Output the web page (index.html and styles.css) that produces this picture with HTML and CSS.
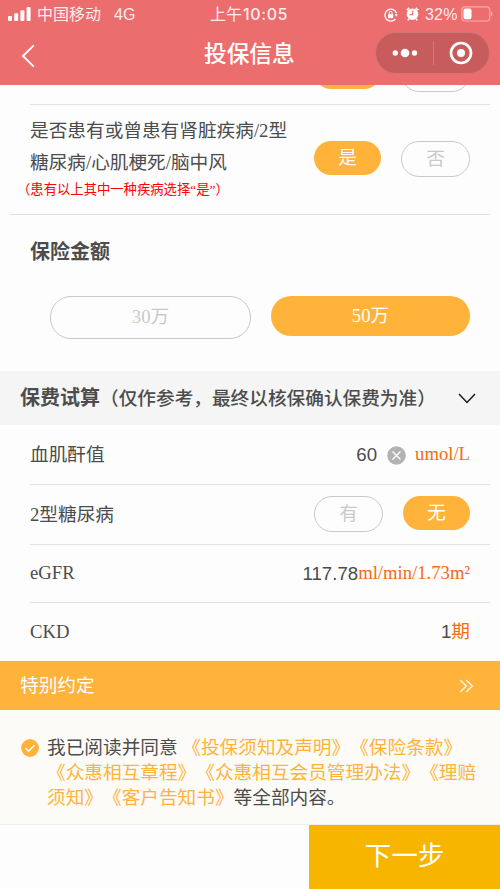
FILE: index.html
```html
<!DOCTYPE html>
<html lang="zh-CN">
<head>
<meta charset="utf-8">
<title>投保信息</title>
<link rel="stylesheet" href="styles.css">
</head>
<body>
<header class="header">
  <div class="status">
    <div class="status-left">
      <svg class="signal" width="23" height="14" viewBox="0 0 23 14" fill="#fff"><rect x="0" y="9" width="4" height="5" rx="1"/><rect x="6.2" y="6.2" width="4" height="7.8" rx="1"/><rect x="12.4" y="3.2" width="4" height="10.8" rx="1"/><rect x="18.6" y="0" width="4" height="14" rx="1"/></svg>
      <span class="carrier">中国移动</span><span class="network">4G</span>
    </div>
    <div class="clock">上午<span class="clock-time">10:05</span></div>
    <div class="status-right">
      <svg width="14" height="14" viewBox="0 0 14 14" fill="none" stroke="#fff" stroke-width="1.3"><path d="M12.6 5.3A6 6 0 1 0 11.5 11"/><path d="M10.6 6.2h3.2l-1.5 2.5z" fill="#fff" stroke="none"/><rect x="4" y="6.2" width="5.2" height="4" fill="#fff" stroke="none"/><path d="M5.1 6.3V5a1.5 1.5 0 0 1 3 0v1.3" stroke-width="1"/></svg>
      <svg class="alarm" width="13" height="14" viewBox="0 0 13 14"><circle cx="6.5" cy="7.2" r="5.8" fill="#fff"/><path d="M.8 3.1 3.3.8M12.2 3.1 9.7.8M2.8 11.8l-1 1.6M10.2 11.8l1 1.6" stroke="#fff" stroke-width="1.6"/><path d="M6.7 3.7v4H3.8" fill="none" stroke="#ec6d6d" stroke-width="1.2"/></svg>
      <span class="percent">32%</span>
      <svg class="battery" width="32" height="16" viewBox="0 0 32 16"><rect x=".8" y=".8" width="28" height="14.2" rx="3.5" fill="none" stroke="#f5adad" stroke-width="1.2"/><rect x="2.5" y="2.6" width="8" height="10.6" rx="2" fill="#fff"/><path d="M30 5.6c2 .5 2 4.300 0 4.800z" fill="#f5adad"/></svg>
    </div>
  </div>
  <div class="nav">
    <svg class="back" width="14" height="24" viewBox="0 0 14 24" fill="none" stroke="#fff" stroke-width="1.9"><path d="M12.800 1.300 2 12l10.800 10.700"/></svg>
    <h1 class="title">投保信息</h1>
    <div class="capsule">
      <svg width="26" height="10" viewBox="0 0 26 10" fill="#fff"><circle cx="3.300" cy="5" r="2.700"/><circle cx="13" cy="5" r="4.300"/><circle cx="22.500" cy="5" r="2.700"/></svg>
      <span class="capsule-line"></span>
      <svg width="24" height="24" viewBox="0 0 24 24"><circle cx="12" cy="12" r="10" fill="none" stroke="#fff" stroke-width="2.700"/><circle cx="12" cy="12" r="4" fill="#fff"/></svg>
    </div>
  </div>
</header>
<main>
  <div class="row row-clipped"><span class="pill on"></span><span class="pill off"></span></div>
  <section class="question">
    <div class="question-text">
      <p class="question-main">是否患有或曾患有肾脏疾病/2型<br>糖尿病/心肌梗死/脑中风</p>
      <p class="hint">（患有以上其中一种疾病选择<span class="quote">“</span>是<span class="quote">”</span>）</p>
    </div>
    <div class="pills"><span class="pill on">是</span><span class="pill off">否</span></div>
  </section>
  <section class="amount">
    <h2 class="amount-title">保险金额</h2>
    <div class="amount-options"><span class="wide off">30万</span><span class="wide on">50万</span></div>
  </section>
  <div class="trial">
    <div class="trial-title">保费试算<span class="trial-note">（仅作参考，最终以核保确认保费为准）</span></div>
    <svg width="18" height="11" viewBox="0 0 18 11" fill="none" stroke="#1c1c1c" stroke-width="1.500"><path d="m1 1 8 8.500L17 1"/></svg>
  </div>
  <div class="row row-creatinine">
    <span>血肌酐值</span>
    <div class="value"><span class="num">60</span>
      <svg class="clear" width="19" height="19" viewBox="0 0 19 19"><circle cx="9.500" cy="9.500" r="9.300" fill="#b2b2b2"/><path d="m5.500 5.500 8 8m0-8-8 8" stroke="#fff" stroke-width="1.300"/></svg>
      <span class="unit">umol/L</span></div>
  </div>
  <div class="row row-diabetes">
    <span>2型糖尿病</span>
    <div class="pills"><span class="pill off">有</span><span class="pill on">无</span></div>
  </div>
  <div class="row row-egfr"><span>eGFR</span><div class="value"><span class="num">117.78</span><span class="unit">ml/min/1.73m²</span></div></div>
  <div class="row row-ckd"><span>CKD</span><div class="value"><span class="num">1</span><span class="unit">期</span></div></div>
  <div class="special">
    <span>特别约定</span>
    <svg width="15" height="14" viewBox="0 0 15 14" fill="none" stroke="#fff2dc" stroke-width="1.600"><path d="m1.200 1 6 6-6 6M7.200 1l6 6-6 6"/></svg>
  </div>
  <section class="agreement">
    <svg class="check" width="18" height="18" viewBox="0 0 18 18"><circle cx="9" cy="9" r="8.900" fill="#ffb33b"/><path d="m4.500 9.200 3 3 6-6" fill="none" stroke="#fff" stroke-width="1.500"/></svg>
    <p class="agreement-text">我已阅读并同意 <a>《投保须知及声明》</a><a>《保险条款》</a><br><a>《众惠相互章程》</a><a>《众惠相互会员管理办法》</a><a>《理赔<br>须知》</a><a>《客户告知书》</a>等全部内容。</p>
  </section>
</main>
<footer class="footer"><div class="next">下一步</div></footer>
</body>
</html>
```

FILE: styles.css
```css
* { box-sizing: border-box; }
body {
  margin: 0;
  width: 500px;
  height: 889px;
  overflow: hidden;
  background: #fdfdfd;
  color: #4c4c4c;
  font: 18.67px/32px "Liberation Serif", "Noto Sans CJK SC", serif;
  text-spacing-trim: space-all;
}
h1, h2, p { margin: 0; }
svg { display: block; flex: none; }

.header { height: 85px; background: #ec6d6d; color: #fff; font-family: "Liberation Sans", "Noto Sans CJK SC", sans-serif; }
.status { height: 28px; display: grid; grid-template-columns: 200px 1fr 120px; font-size: 16px; line-height: 28px; color: #ffecec; }
.status-left { display: flex; align-items: center; padding-left: 8px; }
.signal { margin-top: -2px; }
.carrier { margin-left: 6px; }
.network { margin-left: 13px; }
.clock { padding-left: 10px; white-space: nowrap; }
.clock-time { margin-left: 1px; font-family: Inter, sans-serif; font-weight: 500; letter-spacing: .6px; }
.status-right { display: flex; align-items: center; padding-left: 4px; }
.alarm { margin: -2px 0 0 8px; }
.percent { margin: 0 3px 0 6px; letter-spacing: .2px; }
.battery { margin-top: -1px; }
.nav { height: 57px; display: grid; grid-template-columns: 204px 171px 115px; }
.back { margin: 16px 0 0 21px; }
.title { font-size: 22.7px; line-height: 52px; font-weight: 500; }
.capsule { width: 115px; height: 42px; margin-top: 4px; border: 1px solid #d27777; border-radius: 21px; background: #c85c5c; display: flex; align-items: center; padding-left: 16px; }
.capsule-line { width: 1px; height: 24px; margin: 0 15px 0 15px; background: #d77979; }

.row { margin-left: 30px; width: 460px; padding-right: 20px; display: flex; justify-content: space-between; border-bottom: 1px solid #e2e2e2; }
.row-clipped { height: 20px; overflow: hidden; align-items: flex-end; justify-content: flex-end; gap: 20px; padding-bottom: 12px; }
.row-clipped .on { margin-bottom: 3px; }
.pills { display: flex; gap: 20px; }
.pill { border-radius: 18px; text-align: center; flex: none; }
.pill.on { width: 67px; height: 34px; line-height: 33px; }
.pill.off { width: 69px; height: 36px; line-height: 34px; }
.on { background: #ffb33b; color: #fff; }
.off { border: 1px solid #c9c9c9; color: #c9c9c9; }

.question { margin: 0 10px; height: 110px; padding: 10px 20px 0; display: flex; justify-content: space-between; border-bottom: 1px solid #e2e2e2; }
.question-text { white-space: nowrap; }
.hint { margin-left: -13px; color: #f00; font-family: "Noto Sans CJK SC", sans-serif; font-size: 13.33px; line-height: 20px; }
.quote { font-family: "Liberation Serif", serif; }
.question .pills { padding-top: 26px; }

.amount { height: 156px; padding: 21px 30px 0 30px; }
.amount-title { font-size: 20px; line-height: 32px; font-weight: 700; }
.amount-options { display: flex; gap: 20px; margin: 28px 0 0 20px; }
.wide { border-radius: 21px; text-align: center; }
.wide.off { width: 201px; height: 43px; line-height: 40px; }
.wide.on { width: 199px; height: 40px; line-height: 39px; }

.trial { height: 54px; background: #f5f5f5; padding: 0 24px 0 20px; display: flex; align-items: center; justify-content: space-between; }
.trial-title { padding-bottom: 2px; font-family: "Noto Sans CJK SC", sans-serif; font-size: 20px; font-weight: 700; white-space: nowrap; }
.trial-note { font-size: 18.67px; font-weight: 500; }

.row-creatinine { height: 60px; line-height: 60px; }
.row-creatinine .unit { line-height: 58px; }
.row-diabetes { height: 60px; line-height: 60px; }
.row-egfr { height: 58px; line-height: 56px; }
.row-egfr .num { line-height: 58px; }
.row-egfr .unit { line-height: 56px; }
.row-ckd { height: 58px; line-height: 58px; border-bottom: 0; }
.row-diabetes .pills { padding-top: 11px; }
.value { display: flex; }
.num { font-family: "Liberation Sans", sans-serif; }
.unit { color: #f76b0f; }
.clear { margin: 21px 9px 0 10px; }

.special { height: 49px; padding: 0 26px 0 20px; display: flex; align-items: center; justify-content: space-between; background: #ffb33b; color: #fff; }
.agreement { height: 115px; padding: 25px 0 0 21px; display: flex; background: #fdfbf7; border-bottom: 1px solid #eeeeec; }
.check { margin: 4px 8px 0 0; }
.agreement-text { line-height: 25.200px; white-space: nowrap; }
.agreement-text a { color: #ffb33b; }
.footer { height: 65px; display: flex; justify-content: flex-end; }
.next { width: 191px; background: #f8b500; color: #fff; font-size: 26.67px; line-height: 63px; text-align: center; }
```
